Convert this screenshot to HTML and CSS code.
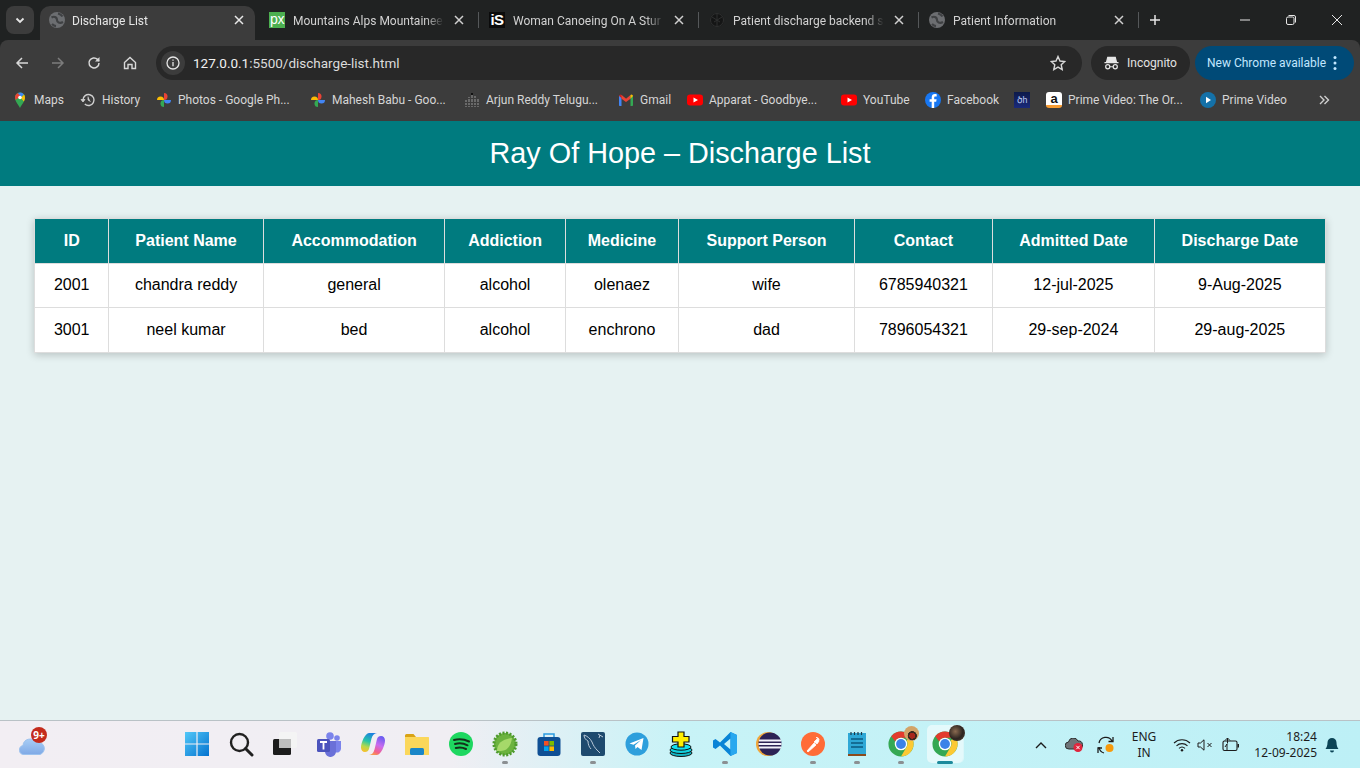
FILE: index.html
```html
<!DOCTYPE html>
<html lang="en">
<head>
<meta charset="utf-8">
<title>Discharge List</title>
<link rel="stylesheet" href="styles.css">
</head>
<body>
<div class="chrome">
  <div class="tabstrip">
    <button class="tab-search"><svg width="12" height="12" viewBox="0 0 12 12"><path d="M2.500 4.500 6 8l3.500-3.500" fill="none" stroke="#e6e6e6" stroke-width="1.800"/></svg></button>
    <div class="tab tab-active">
      <svg class="fav" viewBox="0 0 16 16"><use href="#globe"/></svg>
      <span class="tab-title">Discharge List</span>
      <svg class="tab-x" viewBox="0 0 10 10"><path d="M1 1l8 8M9 1l-8 8" stroke="#e8e8e8" stroke-width="1.500"/></svg>
    </div>
    <div class="tab">
      <span class="fav fav-px">px</span>
      <span class="tab-title">Mountains Alps Mountainee</span>
      <svg class="tab-x" viewBox="0 0 10 10"><path d="M1 1l8 8M9 1l-8 8" stroke="#d0d0d0" stroke-width="1.500"/></svg>
    </div>
    <i class="tab-sep"></i>
    <div class="tab">
      <span class="fav fav-is">iS</span>
      <span class="tab-title">Woman Canoeing On A Stur</span>
      <svg class="tab-x" viewBox="0 0 10 10"><path d="M1 1l8 8M9 1l-8 8" stroke="#d0d0d0" stroke-width="1.500"/></svg>
    </div>
    <i class="tab-sep"></i>
    <div class="tab">
      <svg class="fav" viewBox="0 0 16 16"><circle cx="8" cy="8" r="7" fill="#141515"/><g fill="none" stroke="#2f3030" stroke-width="1"><circle cx="8" cy="8" r="6.500"/><path d="M3 5l8 5M13 5l-8 5M8 2v12"/></g></svg>
      <span class="tab-title">Patient discharge backend s</span>
      <svg class="tab-x" viewBox="0 0 10 10"><path d="M1 1l8 8M9 1l-8 8" stroke="#d0d0d0" stroke-width="1.500"/></svg>
    </div>
    <i class="tab-sep"></i>
    <div class="tab">
      <svg class="fav" viewBox="0 0 16 16"><use href="#globe"/></svg>
      <span class="tab-title">Patient Information</span>
      <svg class="tab-x" viewBox="0 0 10 10"><path d="M1 1l8 8M9 1l-8 8" stroke="#d0d0d0" stroke-width="1.500"/></svg>
    </div>
    <i class="tab-sep"></i>
    <svg class="tab-plus" viewBox="0 0 12 12"><path d="M6 1v10M1 6h10" stroke="#e6e6e6" stroke-width="1.500"/></svg>
    <div class="win-controls">
      <svg viewBox="0 0 12 12"><path d="M1 6h10" stroke="#e6e6e6" stroke-width="1"/></svg>
      <svg viewBox="0 0 12 12"><rect x="1.500" y="3" width="7.500" height="7.500" rx="1.500" fill="none" stroke="#e6e6e6"/><path d="M3.500 1.500h5.500a1.500 1.500 0 0 1 1.500 1.500v5.500" fill="none" stroke="#e6e6e6"/></svg>
      <svg viewBox="0 0 12 12"><path d="M1 1l10 10M11 1L1 11" stroke="#e6e6e6" stroke-width="1"/></svg>
    </div>
  </div>
  <div class="toolbar">
    <div class="nav-btns">
      <svg viewBox="0 0 16 16"><path d="M14 8H3M8 3L3 8l5 5" fill="none" stroke="#d8d8d8" stroke-width="1.500"/></svg>
      <svg viewBox="0 0 16 16"><path d="M2 8h11M8 3l5 5-5 5" fill="none" stroke="#7c7c7c" stroke-width="1.500"/></svg>
      <svg viewBox="0 0 16 16"><path d="M13 8a5 5 0 1 1-1.500-3.600L13 6" fill="none" stroke="#d8d8d8" stroke-width="1.500"/><path d="M13.500 2v4.500H9z" fill="#d8d8d8"/></svg>
      <svg viewBox="0 0 16 16"><path d="M2.500 7.500L8 2.500l5.500 5v6h-3.500v-4H6v4H2.500z" fill="none" stroke="#d8d8d8" stroke-width="1.400"/></svg>
    </div>
    <div class="omnibox">
      <span class="info"><svg viewBox="0 0 14 14"><circle cx="7" cy="7" r="6" fill="none" stroke="#e6e6e6" stroke-width="1.300"/><path d="M7 6v4.200M7 3.500v1.300" stroke="#e6e6e6" stroke-width="1.300"/></svg></span>
      <span class="url"><b>127.0.0.1</b>:5500/discharge-list.html</span>
      <svg class="star" viewBox="0 0 16 16"><path d="M8 1.500l2 4.500 4.800.5-3.600 3.200 1 4.800L8 12.100 3.800 14.500l1-4.800L1.200 6.500 6 6z" fill="none" stroke="#d8d8d8" stroke-width="1.400"/></svg>
    </div>
    <div class="incognito">
      <svg viewBox="0 0 16 14"><path d="M4 1h8l1.300 5H2.700zM0.500 6.500h15" fill="#e6e6e6" stroke="#e6e6e6" stroke-width="1.300"/><circle cx="4" cy="11" r="2.200" fill="none" stroke="#e6e6e6" stroke-width="1.300"/><circle cx="12" cy="11" r="2.200" fill="none" stroke="#e6e6e6" stroke-width="1.300"/><path d="M6 11h4" stroke="#e6e6e6"/></svg>
      <span>Incognito</span>
    </div>
    <div class="update">
      <span>New Chrome available</span>
      <svg viewBox="0 0 4 16"><circle cx="2" cy="2.500" r="1.500" fill="#c2e7ff"/><circle cx="2" cy="8" r="1.500" fill="#c2e7ff"/><circle cx="2" cy="13.500" r="1.500" fill="#c2e7ff"/></svg>
    </div>
  </div>
  <div class="bookmarks">
    <div class="bm"><svg viewBox="0 0 16 16"><path d="M8 16C6 12 3 9.500 3 5.500a5 5 0 0 1 10 0C13 9.500 10 12 8 16z" fill="#34a853"/><path d="M3 5.500A5 5 0 0 1 6 1l3 3-5.500 4z" fill="#ea4335"/><path d="M6 1a5 5 0 0 1 6 1.500L9 5z" fill="#4285f4"/><path d="M12 2.500a5 5 0 0 1 1 3c0 1.500-.5 2.700-1.200 3.900L9 6z" fill="#fbbc04"/><circle cx="8" cy="5.500" r="1.800" fill="#fff"/></svg><span>Maps</span></div>
    <div class="bm"><svg viewBox="0 0 16 16"><path d="M3 8a5.500 5.500 0 1 1 1.800 4.100" fill="none" stroke="#cfcfcf" stroke-width="1.400"/><path d="M1 7.500h4L3 10zM8 4.500V8l2.500 1.500" fill="#cfcfcf" stroke="#cfcfcf" stroke-width=".8"/></svg><span>History</span></div>
    <div class="bm"><svg viewBox="0 0 16 16"><use href="#pinwheel"/></svg><span>Photos - Google Ph...</span></div>
    <div class="bm"><svg viewBox="0 0 16 16"><use href="#pinwheel"/></svg><span>Mahesh Babu - Goo...</span></div>
    <div class="bm"><svg viewBox="0 0 16 16"><g fill="#6a6a6a"><rect x="1" y="8" width="2" height="7"/><rect x="4" y="5" width="2" height="10"/><rect x="7" y="1" width="2" height="14"/><rect x="10" y="4" width="2" height="11"/><rect x="13" y="7" width="2" height="8"/></g><rect x="7" y="1" width="2" height="2" fill="#111"/><path d="M0 6.500h16M0 10.500h16M0 13.500h16" stroke="#3c3c3c"/></svg><span>Arjun Reddy Telugu...</span></div>
    <div class="bm"><svg viewBox="0 0 16 16"><path d="M1 14V4l2.500-1L3.500 14H1.800a.8.800 0 0 1-.8-.8z" fill="#4285f4"/><path d="M12.500 14V3L15 4v9.200a.8.800 0 0 1-.8.800z" fill="#34a853"/><path d="M1 4l7 5.500V6.800L3.500 3A1.500 1.500 0 0 0 1 4z" fill="#c5221f"/><path d="M3.500 3L8 6.800 12.500 3v3.700L8 10 3.500 6.700z" fill="#ea4335"/><path d="M12.500 3A1.500 1.500 0 0 1 15 4l-2.500 2.700z" fill="#fbbc04"/></svg><span>Gmail</span></div>
    <div class="bm"><svg viewBox="0 0 16 16"><use href="#yt"/></svg><span>Apparat - Goodbye...</span></div>
    <div class="bm"><svg viewBox="0 0 16 16"><use href="#yt"/></svg><span>YouTube</span></div>
    <div class="bm"><svg viewBox="0 0 16 16"><circle cx="8" cy="8" r="8" fill="#1877f2"/><path d="M9.200 16V9.800h2l.4-2.500H9.200V5.800c0-.8.300-1.300 1.300-1.300h1.200V2.300c-.5-.1-1.200-.2-1.800-.2-2 0-3.200 1.200-3.200 3.300v1.900H4.600v2.500h2.100V16z" fill="#fff"/></svg><span>Facebook</span></div>
    <div class="bm"><span class="fav-dh">ծh</span></div>
    <div class="bm"><span class="fav-amz">a</span><span>Prime Video: The Or...</span></div>
    <div class="bm"><svg viewBox="0 0 16 16"><circle cx="8" cy="8" r="8" fill="#1471a8"/><path d="M6 4.800l5 3.200-5 3.200z" fill="#fff"/></svg><span>Prime Video</span></div>
    <svg class="more" viewBox="0 0 12 12"><path d="M2 2l4 4-4 4M6.500 2l4 4-4 4" fill="none" stroke="#cfcfcf" stroke-width="1.400"/></svg>
  </div>
</div>

<svg class="defs" width="0" height="0">
  <defs>
    <g id="globe"><circle cx="8" cy="8" r="8" fill="#6c6e71"/><path d="M2.500 5.500C6 3.500 8 6 8 8s2.500 4 6 2M9 1.500c2 .5 3.500 1.500 4.500 3M3 12c1 1 2.500 2 4 2.200" fill="none" stroke="#3f4143" stroke-width="2.200"/></g>
    <g id="pinwheel"><path d="M8 8H1A3.500 3.500 0 0 1 8 8z" fill="#fbbc04"/><path d="M8 8V1A3.500 3.500 0 0 1 8 8z" fill="#ea4335"/><path d="M8 8H15A3.500 3.500 0 0 1 8 8z" fill="#4285f4"/><path d="M8 8V15A3.500 3.500 0 0 1 8 8z" fill="#34a853"/></g>
    <g id="yt"><rect y="2.500" width="16" height="11" rx="3" fill="#f00"/><path d="M6.500 5.500L11 8l-4.500 2.500z" fill="#fff"/></g>
    <g id="chromeicon"><circle cx="14" cy="14" r="13.500" fill="#34a853"/><path d="M14 .5a13.500 13.500 0 0 1 11.700 6.750H14a6.750 6.750 0 0 0-6.200 4.100L3.500 5.600A13.500 13.500 0 0 1 14 .5z" fill="#e33b2e"/><path d="M25.700 7.250A13.500 13.500 0 0 1 14 27.500l5.800-10.100A6.750 6.750 0 0 0 20 10z" fill="#fcc934"/><circle cx="14" cy="14" r="6.750" fill="#fff"/><circle cx="14" cy="14" r="5.300" fill="#3b82e8"/></g>
  </defs>
</svg>

<header class="page-header"><h1>Ray Of Hope – Discharge List</h1></header>

<main class="content">
  <table class="discharge">
    <thead>
      <tr><th>ID</th><th>Patient Name</th><th>Accommodation</th><th>Addiction</th><th>Medicine</th><th>Support Person</th><th>Contact</th><th>Admitted Date</th><th>Discharge Date</th></tr>
    </thead>
    <tbody>
      <tr><td>2001</td><td>chandra reddy</td><td>general</td><td>alcohol</td><td>olenaez</td><td>wife</td><td>6785940321</td><td>12-jul-2025</td><td>9-Aug-2025</td></tr>
      <tr><td>3001</td><td>neel kumar</td><td>bed</td><td>alcohol</td><td>enchrono</td><td>dad</td><td>7896054321</td><td>29-sep-2024</td><td>29-aug-2025</td></tr>
    </tbody>
  </table>
</main>

<footer class="taskbar">
  <div class="weather">
    <svg viewBox="0 0 26 20"><defs><linearGradient id="cl" x1="0" y1="0" x2="0" y2="1"><stop offset="0" stop-color="#a8cdf5"/><stop offset="1" stop-color="#7fa9e6"/></linearGradient></defs><path d="M5 19a4.500 4.500 0 0 1-1-8.900A7 7 0 0 1 17 7a5.500 5.500 0 0 1 4 12z" fill="url(#cl)" stroke="#9cc2ee"/></svg>
    <span class="badge">9+</span>
  </div>
  <div class="task-icons">
    <div class="ti"><svg viewBox="0 0 26 26"><defs><linearGradient id="win" x1="0" y1="0" x2="1" y2="1"><stop offset="0" stop-color="#52c8f8"/><stop offset="1" stop-color="#0472cf"/></linearGradient></defs><path d="M1 1h11.400v11.400H1zM13.600 1H25v11.400H13.600zM1 13.600h11.400V25H1zM13.600 13.600H25V25H13.600z" fill="url(#win)"/></svg></div>
    <div class="ti"><svg viewBox="0 0 26 26"><circle cx="11.500" cy="11.500" r="8.500" fill="none" stroke="#202020" stroke-width="2.400"/><path d="M17.500 17.500L24 24" stroke="#202020" stroke-width="3" stroke-linecap="round"/></svg></div>
    <div class="ti"><svg viewBox="0 0 26 26"><rect x="1" y="8" width="18" height="16" rx="1.500" fill="#1c1c1c"/><rect x="7" y="1" width="18" height="16" rx="1.500" fill="#f4f4f4"/><rect x="7" y="8" width="12" height="9" fill="#bdbdbd"/></svg></div>
    <div class="ti"><svg viewBox="0 0 26 26"><circle cx="21" cy="7" r="2.800" fill="#7b83eb"/><circle cx="14" cy="5" r="3.800" fill="#7b83eb"/><path d="M18 10h7v8a4 4 0 0 1-6 3z" fill="#7b83eb"/><path d="M8 10h12v10a5.500 5.500 0 0 1-11 1z" fill="#6a70d8"/><rect x="1" y="8" width="13" height="13" rx="1.500" fill="#4b53bc"/><path d="M4 11h7M7.500 11v7.500" stroke="#fff" stroke-width="1.800"/></svg></div>
    <div class="ti"><svg viewBox="0 0 26 26"><defs><linearGradient id="cp1" x1=".6" y1="0" x2=".3" y2="1"><stop offset="0" stop-color="#1c7fe0"/><stop offset=".45" stop-color="#26c6a8"/><stop offset=".75" stop-color="#b8d84a"/><stop offset="1" stop-color="#f5c02c"/></linearGradient><linearGradient id="cp2" x1=".7" y1="0" x2=".3" y2="1"><stop offset="0" stop-color="#6a5cf0"/><stop offset=".45" stop-color="#c86cf0"/><stop offset=".8" stop-color="#f4608a"/><stop offset="1" stop-color="#f79a4a"/></linearGradient></defs><path d="M9 2h8c-3 .5-4.500 2-5.500 5.500L9 18c-.6 2-2 3-4 3-2.500 0-4-2-4-4.500C1 12 5 2 9 2z" fill="url(#cp1)"/><path d="M17 24H9c3-.5 4.500-2 5.500-5.500L17 8c.6-2 2-3 4-3 2.500 0 4 2 4 4.500C25 14 21 24 17 24z" fill="url(#cp2)"/></svg></div>
    <div class="ti"><svg viewBox="0 0 26 26"><path d="M1 4.500a1.500 1.500 0 0 1 1.500-1.500h7l2.500 3h-11z" fill="#d9a316"/><path d="M1 6h23.500a.5.500 0 0 1 .5.500V24H1z" fill="#fbd75b"/><rect x="6" y="17" width="14" height="7" rx="1.500" fill="#1a86c8"/></svg></div>
    <div class="ti"><svg viewBox="0 0 26 26"><circle cx="13" cy="13" r="12" fill="#1ed760"/><path d="M6 9c5-1.500 10-1 15 1.500M7 13c4.500-1.200 8.500-.8 12.500 1.300M7.800 17c3.800-1 7-.6 10.200 1" fill="none" stroke="#14301c" stroke-width="2" stroke-linecap="round"/></svg></div>
    <div class="ti run"><svg viewBox="0 0 26 26"><circle cx="13" cy="13" r="11" fill="#6cb33f" stroke="#4e9a2d" stroke-width="3" stroke-dasharray="2 1.500"/><path d="M5 20c0-8 6-12 15-13-1 8-5 13-11 13-1 0-3 0-4 0z" fill="#a6d96a"/></svg><i class="dot"></i></div>
    <div class="ti"><svg viewBox="0 0 26 26"><path d="M8 7V3h10v4" fill="none" stroke="#2b9be0" stroke-width="1.500"/><rect x="1.500" y="6" width="23" height="19" rx="3" fill="#0f4f94"/><rect x="8" y="10" width="4.600" height="4.600" fill="#f25022"/><rect x="13.400" y="10" width="4.600" height="4.600" fill="#7fba00"/><rect x="8" y="15.400" width="4.600" height="4.600" fill="#00a4ef"/><rect x="13.400" y="15.400" width="4.600" height="4.600" fill="#ffb900"/></svg></div>
    <div class="ti run"><svg viewBox="0 0 26 26"><rect x="1" y="1" width="24" height="24" rx="2" fill="#1e4a6e"/><path d="M4 4c3 1 6 3 8 7 1 3 3 6 5 8l3 3M4 4c0 3 2 5 4 6M8 10c0 3 1 6 3 8M18 3l5 3M20 4l-1 3" fill="none" stroke="#b8c8d8" stroke-width="1"/></svg><i class="dot"></i></div>
    <div class="ti"><svg viewBox="0 0 26 26"><circle cx="13" cy="13" r="11.500" fill="#2e9fdc"/><path d="M5.500 12.500L19.500 7 17.500 19l-4-3-2 2-.5-3.500 6-5.500-7.500 4.700z" fill="#fff"/></svg></div>
    <div class="ti"><svg viewBox="0 0 26 26"><ellipse cx="13" cy="22" rx="11" ry="3.500" fill="#12b5c4" stroke="#111"/><ellipse cx="13" cy="19" rx="11" ry="3.500" fill="#12d0de" stroke="#111"/><ellipse cx="13" cy="16" rx="10" ry="3.200" fill="#12e0ee" stroke="#111"/><path d="M10 1h6v4.500h5v5.500h-5v5h-6v-5H4.500V5.500H10z" fill="#ffee00" stroke="#111" stroke-width="1.200"/></svg></div>
    <div class="ti run"><svg viewBox="0 0 26 26"><path d="M18.500 1L25 4v18l-6.500 3L8 14.500 3.500 18 1 16.500V9.500L3.500 8 8 11.500zM18.500 7.500L12 13l6.500 5.500z" fill="#0a84d6"/><path d="M18.500 1L25 4v18l-6.500 3z" fill="#29a8ef"/></svg><i class="dot"></i></div>
    <div class="ti"><svg viewBox="0 0 26 26"><circle cx="12" cy="13" r="12" fill="#f0a63a"/><circle cx="14" cy="13" r="11.500" fill="#2c2255"/><path d="M3 9.500h22M2.500 13h23M3 16.500h22" stroke="#f2f0fa" stroke-width="1.800"/></svg></div>
    <div class="ti run"><svg viewBox="0 0 26 26"><circle cx="13" cy="13" r="12" fill="#ff6c37"/><path d="M7 20l7-8 2 2-8 7zM14 11l3-3 2 2-2 3zM16 6.500a2.500 2.500 0 0 1 3 3" fill="#fff" stroke="#fff" stroke-width=".8"/></svg><i class="dot"></i></div>
    <div class="ti run"><svg viewBox="0 0 26 26"><rect x="4" y="2" width="18" height="21" fill="#2fa8d6"/><path d="M7 1v3M10.500 1v3M14 1v3M17.500 1v3" stroke="#1a3a4a" stroke-width="1.200"/><path d="M7 8h12M7 12h12M7 16h12" stroke="#0d5a80" stroke-width="1.600"/><rect x="4" y="23" width="18" height="2" fill="#8a4a1c"/></svg><i class="dot"></i></div>
    <div class="ti run"><svg viewBox="0 0 28 28"><use href="#chromeicon"/></svg><span class="avatar av-a"></span><i class="dot"></i></div>
    <div class="ti ti-active"><svg viewBox="0 0 28 28"><use href="#chromeicon"/></svg><span class="avatar av-b"></span><i class="dot dot-active"></i></div>
  </div>
  <div class="tray">
    <svg class="tr-chev" viewBox="0 0 12 8"><path d="M1 7l5-5 5 5" fill="none" stroke="#1c1c1c" stroke-width="1.400"/></svg>
    <svg class="tr-cloud" viewBox="0 0 18 14"><path d="M4 11a3.500 3.500 0 0 1-.5-7A5 5 0 0 1 13 3a4 4 0 0 1 1 8z" fill="#6e7478" stroke="#2c2c2c"/><circle cx="13" cy="9.500" r="4.500" fill="#e0243c"/><path d="M11.300 7.800l3.400 3.400M14.700 7.800l-3.400 3.400" stroke="#fff"/></svg>
    <div class="tr-sync"><svg viewBox="0 0 20 20"><path d="M3 8a7 7 0 0 1 13-2M17 2v4.500h-4.500M3 12a7 7 0 0 0 5 6M2 18v-5h4" fill="none" stroke="#1c1c1c" stroke-width="1.300"/><circle cx="13.500" cy="13" r="4" fill="#f79a0c"/></svg></div>
    <div class="lang"><span>ENG</span><span>IN</span></div>
    <svg class="tr-wifi" viewBox="0 0 18 14"><path d="M1 5a11.500 11.500 0 0 1 16 0M3.500 7.800a8 8 0 0 1 11 0M6 10.300a4.500 4.500 0 0 1 6 0" fill="none" stroke="#1c1c1c" stroke-width="1.100"/><circle cx="9" cy="12.300" r="1.200" fill="#1c1c1c"/></svg>
    <svg class="tr-vol" viewBox="0 0 16 14"><path d="M1 5h2.500L7 1.800v10.400L3.500 9H1z" fill="none" stroke="#1c1c1c"/><path d="M10.500 5l4 4M14.500 5l-4 4" stroke="#1c1c1c"/></svg>
    <svg class="tr-bat" viewBox="0 0 18 14"><rect x="1" y="3" width="14" height="9.500" rx="1.500" fill="none" stroke="#1c1c1c" stroke-width="1.100"/><rect x="15.500" y="6" width="1.500" height="3.500" fill="#1c1c1c"/><path d="M5.500 0v5.500M3 2.500L5.500 0 8 2.500M3 9l2-3v6" fill="none" stroke="#1c1c1c"/></svg>
    <div class="clock"><span>18:24</span><span>12-09-2025</span></div>
    <svg class="tr-bell" viewBox="0 0 14 16"><path d="M7 1a4.500 4.500 0 0 0-4.500 4.500c0 3-.8 5-2 6.500h13c-1.200-1.500-2-3.500-2-6.500A4.500 4.500 0 0 0 7 1z" fill="#0c4456"/><path d="M5 13.500a2 2 0 0 0 4 0z" fill="#0c4456"/></svg>
  </div>
</footer>
</body>
</html>
```
FILE: styles.css
```css
* { box-sizing: border-box; }
html, body { margin: 0; height: 100%; }
body {
  width: 1360px;
  height: 768px;
  overflow: hidden;
  display: flex;
  flex-direction: column;
  background: #e6f2f2;
  font-family: "Liberation Sans", Arial, sans-serif;
}
svg { display: block; flex: none; }
.defs { position: absolute; }

/* browser chrome */
.chrome { flex: none; background: #202222; font-family: Roboto, "Noto Sans", sans-serif; font-size: 12px; }
.tabstrip { height: 40px; display: flex; align-items: flex-end; padding-left: 6px; }
.tab-search {
  width: 28px; height: 28px; margin: 0 6px 6px 0; padding: 0; border: 0; border-radius: 8px;
  background: #3c3c3c; display: flex; align-items: center; justify-content: center;
}
.tab { width: 218px; height: 34px; display: flex; align-items: center; padding: 0 0 6px 9px; color: #d2d2d2; }
.tab + .tab { margin-left: 5px; }
.tab-active {
  width: 215px; background: #3c3c3c; border-radius: 10px 10px 0 0; color: #e6e6e6; padding-bottom: 6px;
}
.fav { width: 16px; height: 16px; flex: none; }
.tab-title {
  width: 151px; margin: 1px 0 0 8px; white-space: nowrap; overflow: hidden;
  -webkit-mask-image: linear-gradient(90deg, #000 88%, transparent);
  mask-image: linear-gradient(90deg, #000 88%, transparent);
}
.tab-active .tab-title { width: 152px; margin-left: 7px; }
.tab-x { width: 10px; height: 10px; margin-left: 10px; flex: none; }
.fav-px {
  background: #4caf50; color: #fff; font: 14px/14px "Liberation Sans", sans-serif; text-align: center; letter-spacing: -.5px;
}
.fav-is {
  background: #0b0b0b; color: #fff; font: bold 15px/16px "Liberation Sans", sans-serif; text-align: center; letter-spacing: -.5px;
}
.tab-sep { width: 1px; height: 16px; margin: 0 1px 12px 0; background: #55585a; flex: none; }
.tab-plus { width: 12px; height: 12px; margin: 0 0 14px 9px; }
.win-controls { margin-left: auto; display: flex; gap: 34px; padding: 0 17px 14px 0; }
.win-controls svg { width: 12px; height: 12px; }

.toolbar {
  height: 40px; background: #3c3c3c; border-radius: 8px 8px 0 0;
  display: flex; padding: 6px 6px 0 0; align-items: stretch;
}
.nav-btns { width: 156px; display: flex; gap: 20px; padding-left: 14px; align-items: center; }
.nav-btns svg { width: 16px; height: 16px; }
.omnibox {
  width: 926px; background: #282828; border-radius: 17px; display: flex; align-items: center; padding: 0 16px 0 5px;
  color: #c4c7c5; font-size: 13.500px;
}
.info { width: 24px; height: 24px; border-radius: 50%; background: #3c3c3c; display: flex; align-items: center; justify-content: center; }
.info svg { width: 14px; height: 14px; }
.url { margin-left: 8px; color: #dcdcdc; }
.url b { font-weight: 400; color: #f1f1f1; }
.star { width: 16px; height: 16px; margin-left: auto; }
.incognito {
  width: 99px; margin-left: 9px; background: #282828; border-radius: 17px; display: flex; align-items: center;
  gap: 8px; padding-left: 13px; color: #e3e3e3;
}
.incognito svg { width: 15px; height: 14px; }
.update {
  width: 159px; margin-left: 5px; background: #004a77; border-radius: 17px; display: flex; align-items: center;
  padding-left: 12px; color: #c2e7ff; font-size: 12px;
}
.update svg { width: 4px; height: 16px; margin-left: 7px; }

.bookmarks {
  height: 41px; background: #3c3c3c; display: grid; align-items: center; padding-left: 12px; color: #d6d6d6; font-size: 12px;
  grid-template-columns: 68px 76px 154px 154px 154px 69px 154px 84px 89px 32px 154px 118px 16px;
  padding-bottom: 1px;
}
.bm { display: flex; align-items: center; gap: 6px; white-space: nowrap; }
.bm svg { width: 16px; height: 16px; }
.fav-dh {
  width: 16px; height: 16px; background: linear-gradient(#0d1a4a, #1a2a7a); color: #b8c8f0; font-size: 9px; line-height: 16px; text-align: center; overflow: hidden;
}
.fav-amz {
  width: 16px; height: 16px; background: #fff; border-radius: 3px; color: #111; font: bold 13px/13px "Liberation Sans", sans-serif; text-align: center;
  border-bottom: 3px solid #f79c34;
}
.more { width: 12px; height: 12px; }

/* page */
.page-header { flex: none; height: 65px; background: #007b7f; display: flex; align-items: center; justify-content: center; }
.page-header h1 { margin: 0; color: #fff; font-size: 28.800px; font-weight: 400; }
.content { flex: 1; padding: 32px 34px 0; min-height: 0; }
.discharge {
  width: 100%; border-collapse: collapse; background: #fff; box-shadow: 0 2px 8px rgba(0, 0, 0, .2); font-size: 16px;
}
.discharge th, .discharge td { border: 1px solid #ddd; padding: 12.800px; text-align: center; color: #000; }
.discharge th { background: #007b7f; color: #fff; font-weight: 700; }

/* taskbar */
.taskbar {
  flex: none; height: 48px; border-top: 1px solid #b9c2c6; display: flex; position: relative;
  background: linear-gradient(90deg, #f2eef3 0, #f0eef3 33%, #c8f3f7 50%, #bdf0f6 100%);
}
.weather { width: 175px; padding: 14px 0 0 19px; position: relative; }
.weather svg { width: 26px; height: 21px; }
.badge {
  position: absolute; left: 31px; top: 6px; width: 16px; height: 16px; border-radius: 50%; background: #c42b1c; color: #fff;
  font: 700 10px/16px "Noto Sans", sans-serif; text-align: center;
}
.task-icons { display: flex; }
.ti { width: 44px; height: 47px; padding-top: 10px; display: flex; flex-direction: column; align-items: center; position: relative; }
.ti svg { width: 26px; height: 26px; }
.dot { width: 6px; height: 3px; margin-top: 4px; background: #8b8f92; border-radius: 2px; }
.ti-active::before {
  content: ""; position: absolute; left: 4px; top: 4px; width: 36px; height: 38px; border-radius: 5px;
  background: rgba(255, 255, 255, .55); box-shadow: 1px 0 0 rgba(255, 255, 255, .4);
}
.ti-active svg { position: relative; }
.dot-active { width: 16px; background: #1c8a9c; position: relative; }
.avatar { position: absolute; top: 5px; left: 25px; width: 15px; height: 15px; border-radius: 50%; }
.av-a { background: radial-gradient(circle at 55% 65%, #a8281c 0 22%, #3a2a20 24% 34%, #d2a468 38%); }
.av-b { left: 26px; top: 4px; width: 16px; height: 16px; background: radial-gradient(circle at 40% 40%, #8a6a50, #2c2420 55%, #5a4636); }

.tray { flex: 1; display: flex; align-items: center; font-family: "Noto Sans", sans-serif; font-size: 12px; color: #1c1c1c; padding-left: 68px; }
.tr-chev { width: 12px; height: 8px; }
.tr-cloud { width: 18px; height: 14px; margin-left: 18px; }
.tr-sync { width: 20px; margin-left: 13px; }
.tr-sync svg { width: 20px; height: 20px; }
.lang { width: 40px; margin-left: 8px; display: flex; flex-direction: column; align-items: center; line-height: 16px; }
.tr-wifi { width: 18px; height: 14px; margin-left: 9px; }
.tr-vol { width: 16px; height: 14px; margin-left: 6px; }
.tr-bat { width: 18px; height: 14px; margin-left: 9px; }
.clock { width: 77px; display: flex; flex-direction: column; align-items: flex-end; line-height: 16px; }
.tr-bell { width: 14px; height: 16px; margin-left: 8px; }
```
